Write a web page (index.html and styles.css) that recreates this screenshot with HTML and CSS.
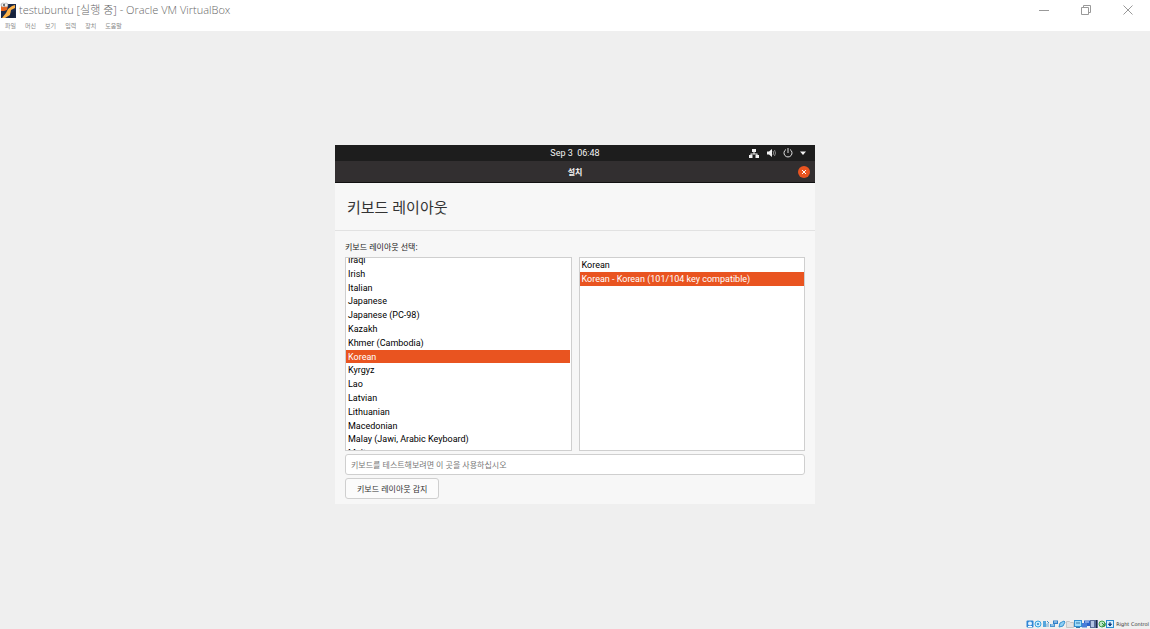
FILE: index.html
```html
<!DOCTYPE html>
<html lang="ko">
<head>
    <meta charset="utf-8">
    <title>testubuntu [실행 중] - Oracle VM VirtualBox</title>
    <link rel="stylesheet" href="styles.css">
</head>
<body>
    <header class="titlebar">
        <svg class="app-icon" viewBox="0 0 16 16">
            <rect x="1" y="2" width="15" height="14" fill="#1b2a4a"/>
            <path d="M1 4h7l-1 4-3 1-3 0z" fill="#e8641c"/>
            <path d="M15 3v3l-4 2-1 5-5 3H2l4-5 2-4 4-3z" fill="#ffb347"/>
            <path d="M11 11l4-2v5l-3 2h-3z" fill="#16213a"/>
            <circle cx="3" cy="3" r="2" fill="#eee" stroke="#999" stroke-width=".5"/>
            <circle cx="6" cy="3" r="2" fill="#eee" stroke="#999" stroke-width=".5"/>
            <circle cx="4" cy="3" r="1" fill="#555"/>
        </svg>
        <h1 class="app-title">testubuntu [실행 중] - Oracle VM VirtualBox</h1>
        <div class="window-buttons">
            <button type="button" aria-label="최소화"><svg viewBox="0 0 12 12"><path d="M1 6.500h10"/></svg></button>
            <button type="button" aria-label="이전 크기로"><svg viewBox="0 0 12 12"><path d="M1.500 3.500h7v7h-7zM3.500 3.500v-2h7v7h-2"/></svg></button>
            <button type="button" aria-label="닫기"><svg viewBox="0 0 12 12"><path d="M1.500 1.500l9 9M10.500 1.500l-9 9"/></svg></button>
        </div>
    </header>
    <nav class="menubar">
        <a href="#">파일</a>
        <a href="#">머신</a>
        <a href="#">보기</a>
        <a href="#">입력</a>
        <a href="#">장치</a>
        <a href="#">도움말</a>
    </nav>

    <main class="workspace">
        <div class="guest">
            <div class="topbar">
                <span class="clock">Sep 3&nbsp; 06:48</span>
                <div class="tray">
                    <svg viewBox="0 0 10 10"><path d="M3 1h4v3H5.500v1.500H8.500V7H10v3H6.500V7h1V6.500h-5V7h1v3H0V7h1.500V5.500h3V4H3z" fill="#f2f2f2"/></svg>
                    <svg viewBox="0 0 10 10"><path d="M1 3.500h2L6 1v8L3 6.500H1z" fill="#f2f2f2"/><path d="M7 3q1.500 2 0 4M8.500 2q2 3 0 6" fill="none" stroke="#888"/></svg>
                    <svg viewBox="0 0 10 10"><path d="M3 1.500a4 4 0 1 0 4 0M5 0v5" fill="none" stroke="#ddd"/></svg>
                    <svg class="caret" viewBox="0 0 6 10"><path d="M0 3.500h6L3 7z" fill="#f2f2f2"/></svg>
                </div>
            </div>
            <div class="headerbar">
                <span class="window-title">설치</span>
                <button type="button" class="close" aria-label="닫기"><svg viewBox="0 0 12 12"><path d="M4 4l4 4M8 4l-4 4"/></svg></button>
            </div>
            <h2 class="page-title">키보드 레이아웃</h2>
            <div class="page">
                <p class="prompt" id="prompt">키보드 레이아웃 선택:</p>
                <div class="lists">
                    <div class="list-box">
                        <ul class="layouts scrolled" role="listbox" aria-labelledby="prompt">
                            <li role="option">Iraqi</li>
                            <li role="option">Irish</li>
                            <li role="option">Italian</li>
                            <li role="option">Japanese</li>
                            <li role="option">Japanese (PC-98)</li>
                            <li role="option">Kazakh</li>
                            <li role="option">Khmer (Cambodia)</li>
                            <li role="option" class="selected" aria-selected="true">Korean</li>
                            <li role="option">Kyrgyz</li>
                            <li role="option">Lao</li>
                            <li role="option">Latvian</li>
                            <li role="option">Lithuanian</li>
                            <li role="option">Macedonian</li>
                            <li role="option">Malay (Jawi, Arabic Keyboard)</li>
                            <li role="option">Maltese</li>
                        </ul>
                    </div>
                    <div class="list-box">
                        <ul class="layouts" role="listbox" aria-labelledby="prompt">
                            <li role="option">Korean</li>
                            <li role="option" class="selected" aria-selected="true">Korean - Korean (101/104 key compatible)</li>
                        </ul>
                    </div>
                </div>
                <input class="test-input" type="text" aria-label="키보드 테스트" placeholder="키보드를 테스트해보려면 이 곳을 사용하십시오">
                <button type="button" class="detect">키보드 레이아웃 감지</button>
            </div>
        </div>
    </main>

    <footer class="statusbar">
        <svg viewBox="0 0 8 8"><rect x=".5" y=".5" width="7" height="7" rx="1" fill="#2f86d6"/><circle cx="4" cy="3.500" r="2" fill="#dff1ff"/><path d="M2 6.500h4" stroke="#fff"/></svg>
        <svg viewBox="0 0 8 8"><circle cx="4" cy="4" r="3" fill="#c9ecff" stroke="#38a3e0"/><circle cx="4" cy="4" r="1" fill="#2583c4"/></svg>
        <svg viewBox="0 0 8 8"><path d="M1 1h3v6H1z" fill="#55a5dc"/><path d="M4 4l3-2v5H4z" fill="#a9c9df"/><path d="M5 1l2 2" stroke="#4b8fc4"/></svg>
        <svg viewBox="0 0 8 8"><path d="M3 .5h5V4H3z" fill="#2f7fc9"/><path d="M0 4h5v3H0z" fill="#4c94cf"/><path d="M1 5h3M4 2h3" stroke="#cfe8fa"/></svg>
        <svg viewBox="0 0 8 8"><path d="M1 7l1-4 4-2 1 1-2 4z" fill="#8fd0f5" stroke="#3792d0"/></svg>
        <svg viewBox="0 0 8 8"><path d="M.5 1.500h3l1 1h3v5h-7z" fill="#e3e3e3" stroke="#c6c6c6"/></svg>
        <svg viewBox="0 0 8 8"><rect x=".5" y=".5" width="7" height="6" fill="#9edcfa" stroke="#3390d0"/><path d="M2 3h4M2 7.500h4" stroke="#3876a8"/></svg>
        <svg viewBox="0 0 8 8"><path d="M2 .5h6V6H2z" fill="#2b62c8"/><path d="M0 3h5v4.500H0z" fill="#477dd8"/><path d="M3 2h4" stroke="#cfe0ff"/></svg>
        <svg viewBox="0 0 8 8"><rect width="8" height="8" fill="#596d9b"/><path d="M1 1h3v6H1z" fill="#b4c4e3"/><path d="M6.500 0v8" stroke="#222b45"/></svg>
        <svg viewBox="0 0 8 8"><circle cx="4" cy="4" r="3" fill="#b9e6c6" stroke="#3aa24c"/><path d="M4 3l3 3M7 3v3H4" fill="none" stroke="#278b38"/></svg>
        <svg viewBox="0 0 8 8"><rect x=".5" y=".5" width="7" height="7" fill="#d4efff" stroke="#2b8bd0"/><path d="M4 2v3M2.500 4h3L4 6z" fill="#123a7a" stroke="#123a7a"/></svg>
        <span class="host-key">Right Control</span>
    </footer>
</body>
</html>
```
FILE: styles.css
```css
* { box-sizing: border-box; }
body {
    display: flex;
    flex-direction: column;
    min-height: 100vh;
    margin: 0;
    background: #efefef;
    font-family: "Noto Sans", "Noto Sans CJK KR", sans-serif;
}
h1, h2, p, ul { margin: 0; padding: 0; font-weight: normal; }
button { padding: 0; border: 0; background: none; font-family: inherit; }
svg { display: block; flex: none; }

/* host window */
.titlebar {
    display: flex;
    align-items: center;
    height: 20px;
    background: #fff;
}
.app-icon { width: 16px; height: 16px; margin-right: 3px; }
.app-title {
    flex: 1;
    color: #666;
    font-family: "Open Sans", "Noto Sans CJK KR", sans-serif;
    font-size: 11px;
    font-weight: 300;
    line-height: 22px;
}
.window-buttons { display: flex; gap: 30px; padding-right: 16px; }
.window-buttons svg { width: 12px; height: 12px; fill: none; stroke: #999; }
.menubar {
    display: flex;
    gap: 9px;
    height: 11px;
    padding-left: 5px;
    background: #fff;
}
.menubar a {
    color: #888;
    font-family: "Noto Sans CJK KR", sans-serif;
    font-size: 6px;
    line-height: 11px;
    text-decoration: none;
}

/* guest screen */
.workspace {
    display: flex;
    flex: 1;
    align-items: center;
    justify-content: center;
}
.guest { width: 480px; background: #f7f7f7; color: #222; font-size: 9px; }
.topbar, .headerbar {
    display: grid;
    grid-template-columns: 1fr auto 1fr;
    align-items: center;
    color: #f2f2f2;
}
.topbar { height: 16px; background: #1d1d1d; font-family: Roboto, sans-serif; }
.clock, .window-title { grid-column: 2; }
.tray { display: flex; justify-content: flex-end; gap: 7px; padding-right: 9px; }
.tray svg { width: 10px; height: 10px; }
.tray .caret { width: 6px; }
.headerbar { height: 22px; border-bottom: 1px solid #111; background: #322f30; }
.window-title { font-size: 8px; font-weight: bold; }
.close {
    justify-self: end;
    margin-right: 5px;
    border-radius: 50%;
    background: #e95420;
}
.close svg { width: 12px; height: 12px; fill: none; stroke: #fff; }
.page-title {
    height: 48px;
    padding-left: 12px;
    border-bottom: 1px solid #e2e2e2;
    color: #333;
    font-size: 15px;
    line-height: 48px;
}
.page { padding: 8px 10px 5px; }
.prompt { height: 18px; font-size: 8px; line-height: 16px; }
.lists { display: grid; grid-template-columns: 1fr 1fr; gap: 7px; }
.list-box {
    height: 194px;
    overflow: hidden;
    border: 1px solid #cfcfcf;
    background: #fff;
}
.layouts {
    display: grid;
    color: #000;
    font-family: Roboto, sans-serif;
    line-height: 14px;
    list-style: none;
}
/* fifteen rows, scrolled a little past the first */
.scrolled { height: 207px; margin-top: -5px; grid-auto-rows: 1fr; }
.layouts li { min-height: 0; padding-left: 2px; }
.layouts .selected { background: #e95420; color: #fff; }
.scrolled .selected { margin-right: 1px; }
.test-input {
    display: block;
    width: 100%;
    height: 21px;
    margin: 3px 0;
    padding: 0 5px;
    border: 1px solid #cfcfcf;
    border-radius: 3px;
    background: #fff;
    font: inherit;
    font-size: 8px;
}
.test-input::placeholder { color: #777; }
.detect {
    height: 21px;
    padding: 0 11px;
    border: 1px solid #cfcfcf;
    border-radius: 3px;
    background: #fbfbfb;
    color: #333;
    font-size: 8px;
}

.statusbar {
    display: flex;
    align-items: center;
    justify-content: flex-end;
    height: 11px;
    padding-right: 1px;
    color: #333;
    font-family: "DejaVu Sans", sans-serif;
    font-size: 5px;
}
.statusbar svg { width: 8px; height: 8px; }
.host-key { margin-left: 2px; }
```
